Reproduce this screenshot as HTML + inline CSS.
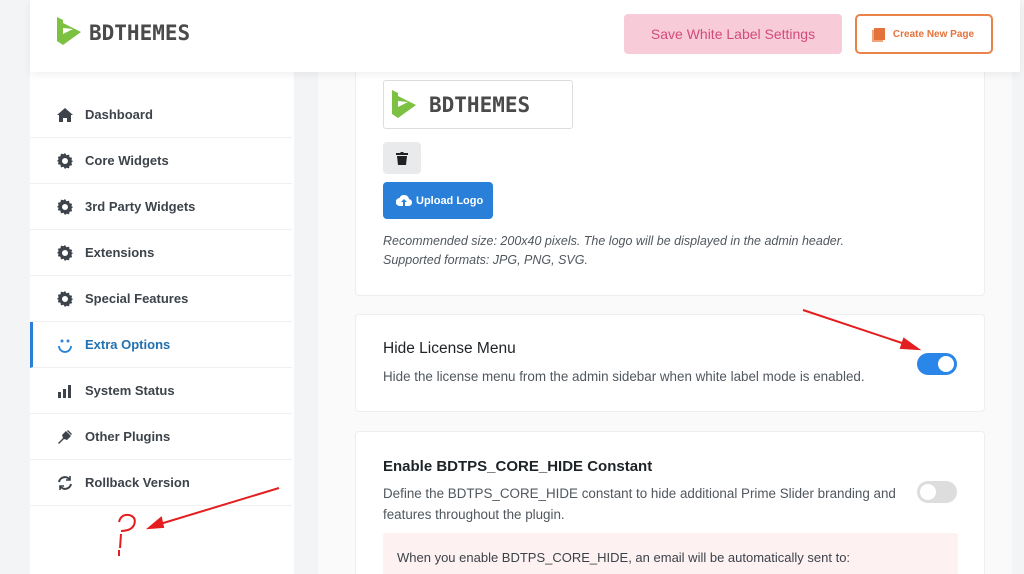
<!DOCTYPE html>
<html><head><meta charset="utf-8"><style>
*{box-sizing:border-box;margin:0;padding:0}
html,body{width:1024px;height:574px;overflow:hidden}
body{background:#f3f4f6;font-family:"Liberation Sans",Arial,sans-serif;position:relative}
.main{position:absolute;left:318px;top:60px;width:694px;height:520px;background:#fafafa}
.side{position:absolute;left:30px;top:72px;width:264px;height:510px;background:#fff}
.header{position:absolute;left:30px;top:0;width:990px;height:72px;background:#fff;box-shadow:0 3px 8px rgba(0,0,0,.06)}
.logo{position:absolute;font-family:"DejaVu Sans Mono","Liberation Mono",monospace;font-weight:bold;color:#4a4a4a;letter-spacing:0px}
.item{position:absolute;left:0;width:262px;height:46px;border-bottom:1px solid #f1f1f1;display:flex;align-items:center;padding-left:27px;font-size:13px;font-weight:bold;color:#3c434a}
.item svg{width:16px;height:16px;margin-right:12px;fill:#3c434a}
.card{position:absolute;left:355px;width:630px;background:#fff;border:1px solid #eee;border-radius:4px}
.tog{position:absolute;width:40px;height:22px;border-radius:11px}
.tog i{position:absolute;top:3px;width:16px;height:16px;border-radius:50%;background:#fff}
</style></head><body>
<div class="main"></div>
<div class="side">
<div class="item" style="top:20px"><svg viewBox="0 0 16 16"><path d="M8 1L0 8h2v7h4v-4h4v4h4V8h2z"/></svg>Dashboard</div>
<div class="item" style="top:66px"><svg viewBox="0 0 16 16"><path d="M8 0l1.5 2.2 2.6-.6.4 2.6 2.6.5-.7 2.5L16 8l-1.6 1.8.7 2.5-2.6.5-.4 2.6-2.6-.6L8 16l-1.5-2.2-2.6.6-.4-2.6-2.6-.5.7-2.5L0 8l1.6-1.8-.7-2.5 2.6-.5.4-2.6 2.6.6zM8 5a3 3 0 100 6 3 3 0 000-6z"/></svg>Core Widgets</div>
<div class="item" style="top:112px"><svg viewBox="0 0 16 16"><path d="M8 0l1.5 2.2 2.6-.6.4 2.6 2.6.5-.7 2.5L16 8l-1.6 1.8.7 2.5-2.6.5-.4 2.6-2.6-.6L8 16l-1.5-2.2-2.6.6-.4-2.6-2.6-.5.7-2.5L0 8l1.6-1.8-.7-2.5 2.6-.5.4-2.6 2.6.6zM8 5a3 3 0 100 6 3 3 0 000-6z"/></svg>3rd Party Widgets</div>
<div class="item" style="top:158px"><svg viewBox="0 0 16 16"><path d="M8 0l1.5 2.2 2.6-.6.4 2.6 2.6.5-.7 2.5L16 8l-1.6 1.8.7 2.5-2.6.5-.4 2.6-2.6-.6L8 16l-1.5-2.2-2.6.6-.4-2.6-2.6-.5.7-2.5L0 8l1.6-1.8-.7-2.5 2.6-.5.4-2.6 2.6.6zM8 5a3 3 0 100 6 3 3 0 000-6z"/></svg>Extensions</div>
<div class="item" style="top:204px"><svg viewBox="0 0 16 16"><path d="M8 0l1.5 2.2 2.6-.6.4 2.6 2.6.5-.7 2.5L16 8l-1.6 1.8.7 2.5-2.6.5-.4 2.6-2.6-.6L8 16l-1.5-2.2-2.6.6-.4-2.6-2.6-.5.7-2.5L0 8l1.6-1.8-.7-2.5 2.6-.5.4-2.6 2.6.6zM8 5a3 3 0 100 6 3 3 0 000-6z"/></svg>Special Features</div>
<div class="item" style="top:250px;color:#2271b1;border-left:3px solid #2a80d8;padding-left:24px"><svg viewBox="0 0 16 16" style="fill:none;stroke:#2a80d8;stroke-width:1.8"><path d="M2 9a6 6 0 0012 0"/><circle cx="5" cy="4" r=".6"/><circle cx="11" cy="4" r=".6"/></svg>Extra Options</div>
<div class="item" style="top:296px"><svg viewBox="0 0 16 16"><path d="M1 9h3v6H1zM6 6h3v9H6zM11 2h3v13h-3z"/></svg>System Status</div>
<div class="item" style="top:342px"><svg viewBox="0 0 16 16"><path d="M9 2l5 5-4 4-3-1-5 5-1-1 5-5-1-3zM11 1l4 4-1 1-4-4z"/></svg>Other Plugins</div>
<div class="item" style="top:388px"><svg viewBox="0 0 16 16" style="fill:none;stroke:#3c434a;stroke-width:2"><path d="M2 7a6 6 0 0111-2M14 9a6 6 0 01-11 2"/><path d="M13 1v4H9M3 15v-4h4" style="stroke-width:1.6"/></svg>Rollback Version</div>
</div>
<div class="card" style="top:40px;height:256px;border-top:none">
<div style="position:absolute;left:27px;top:40px;width:190px;height:49px;border:1px solid #ddd;border-radius:3px;background:#fff">
<svg style="position:absolute;left:8px;top:8px" width="24" height="32" viewBox="0 0 24 30"><path d="M0 0l6 3v14l10-5-10-1V6l18 9L6 28 0 24z" fill="#7cc142"/></svg>
<div class="logo" style="left:45px;top:12px;font-size:21px">BDTHEMES</div></div>
<div style="position:absolute;left:27px;top:102px;width:38px;height:32px;background:#e8eaec;border-radius:4px"><svg style="position:absolute;left:13px;top:10px" width="12" height="13" viewBox="0 0 12 13"><path d="M0 1h4l1-1h2l1 1h4v2H0zM1 4h10l-1 9H2z" fill="#222"/></svg></div>
<div style="position:absolute;left:27px;top:142px;width:110px;height:37px;background:#2a80d8;border-radius:4px;color:#fff;font-size:11px;font-weight:bold;display:flex;align-items:center;padding-left:33px">Upload Logo
<svg style="position:absolute;left:13px;top:13px" width="16" height="12" viewBox="0 0 16 12"><path d="M4 11a4 4 0 01-.5-8A5 5 0 0113 4a3.5 3.5 0 01-1 7H9V7h2L8 4 5 7h2v4z" fill="#fff"/></svg></div>
<div style="position:absolute;left:27px;top:192px;font-size:12.5px;font-style:italic;color:#50575e;line-height:19px">Recommended size: 200x40 pixels. The logo will be displayed in the admin header.<br>Supported formats: JPG, PNG, SVG.</div>
</div>
<div class="card" style="top:314px;height:98px">
<div style="position:absolute;left:27px;top:25px;font-size:15.5px;color:#1d2327">Hide License Menu</div>
<div style="position:absolute;left:27px;top:54px;font-size:13.4px;color:#50575e">Hide the license menu from the admin sidebar when white label mode is enabled.</div>
<div class="tog" style="left:561px;top:38px;background:#2a86e8"><i style="left:21px"></i></div>
</div>
<div class="card" style="top:431px;height:150px">
<div style="position:absolute;left:27px;top:26px;font-size:15px;font-weight:bold;color:#1d2327">Enable BDTPS_CORE_HIDE Constant</div>
<div style="position:absolute;left:27px;top:51px;font-size:13.4px;color:#50575e;line-height:21px;width:515px">Define the BDTPS_CORE_HIDE constant to hide additional Prime Slider branding and features throughout the plugin.</div>
<div class="tog" style="left:561px;top:49px;background:#ddd"><i style="left:3px"></i></div>
<div style="position:absolute;left:27px;top:101px;width:575px;height:60px;background:#fdf1f1;border-radius:3px;font-size:13px;color:#3c434a;padding:17px 14px">When you enable BDTPS_CORE_HIDE, an email will be automatically sent to:</div>
</div>
<div class="header">
<svg style="position:absolute;left:27px;top:17px" width="24" height="30" viewBox="0 0 24 30"><path d="M0 0l6 3v14l10-5-10-1V6l18 9L6 28 0 24z" fill="#7cc142"/></svg>
<div class="logo" style="left:59px;top:21px;font-size:21px">BDTHEMES</div>
<div style="position:absolute;left:594px;top:14px;width:218px;height:40px;background:#f8cbd9;border-radius:4px;color:#d14b7a;font-size:14px;display:flex;align-items:center;justify-content:center">Save White Label Settings</div>
<div style="position:absolute;left:825px;top:14px;width:138px;height:40px;border:2px solid #e9834a;border-radius:5px;color:#e3733b;font-size:10px;font-weight:bold;display:flex;align-items:center;justify-content:center"><span style="display:inline-block;width:11px;height:12px;background:#e3733b;margin-right:8px;box-shadow:-2px 2px 0 #f0a57a"></span>Create New Page</div>
</div>
<svg style="position:absolute;left:0;top:0" width="1024" height="574">
<g stroke="#e41e1e" stroke-width="2" fill="#e41e1e">
<line x1="803" y1="310" x2="905" y2="344"/><path d="M918 349l-17-1 3-9z"/>
<line x1="279" y1="488" x2="160" y2="524"/><path d="M149 528l12-10 2 9z"/>
<path d="M119 522q2-8 10-7 8 2 5 10-3 6-13 6" fill="none"/><line x1="121" y1="534" x2="120" y2="548"/><line x1="119" y1="550" x2="119" y2="556"/>
</g></svg>
</body></html>
